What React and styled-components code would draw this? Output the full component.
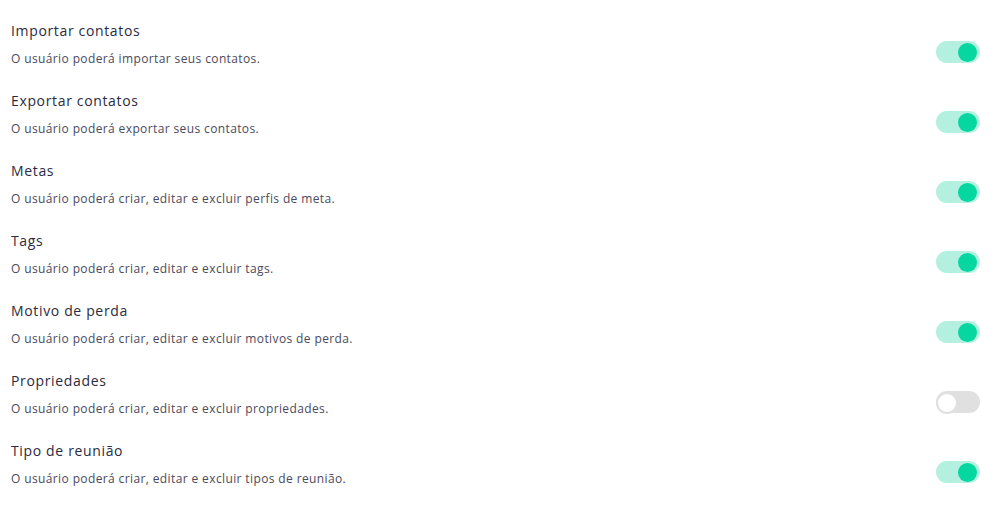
import React, { useState } from "react";
import styled, { createGlobalStyle } from "styled-components";

const Global = createGlobalStyle`
  html, body { margin: 0; padding: 0; background: #ffffff; }
  body { font-family: "Open Sans", "Noto Sans", sans-serif; }
`;

const List = styled.div`
  display: flex;
  flex-direction: column;
  padding: 16px 14px 0 11px;
`;

const Row = styled.div`
  display: flex;
  justify-content: space-between;
  align-items: flex-start;
  height: 70px;
`;

const TextBlock = styled.div`
  display: flex;
  flex-direction: column;
  padding-top: 5px;
`;

const Title = styled.div`
  font-size: 14px;
  line-height: 20px;
  color: #2b2b40;
  letter-spacing: 0.65px;
`;

const Desc = styled.div`
  margin-top: 8px;
  font-size: 12px;
  line-height: 20px;
  color: #4a4a5c;
  letter-spacing: 0.38px;
`;

const Track = styled.button`
  position: relative;
  margin-top: 25px;
  width: 44px;
  height: 22px;
  border: none;
  padding: 0;
  border-radius: 11px;
  cursor: pointer;
  background: ${(p) => (p.$on ? "#b3f0e0" : "#e0e0e0")};
`;

const Knob = styled.span`
  position: absolute;
  top: ${(p) => (p.$on ? "1.5px" : "1px")};
  left: ${(p) => (p.$on ? "22px" : "0px")};
  width: ${(p) => (p.$on ? "19px" : "18px")};
  height: ${(p) => (p.$on ? "19px" : "18px")};
  border-radius: 50%;
  background: ${(p) => (p.$on ? "#06d6a0" : "#ffffff")};
  border: ${(p) => (p.$on ? "none" : "2px solid #e0e0e0")};
  box-sizing: content-box;
`;

const items = [
  ["Importar contatos", "O usuário poderá importar seus contatos.", true],
  ["Exportar contatos", "O usuário poderá exportar seus contatos.", true],
  ["Metas", "O usuário poderá criar, editar e excluir perfis de meta.", true],
  ["Tags", "O usuário poderá criar, editar e excluir tags.", true],
  ["Motivo de perda", "O usuário poderá criar, editar e excluir motivos de perda.", true],
  ["Propriedades", "O usuário poderá criar, editar e excluir propriedades.", false],
  ["Tipo de reunião", "O usuário poderá criar, editar e excluir tipos de reunião.", true],
];

function Toggle({ initial }) {
  const [on, setOn] = useState(initial);
  return (
    <Track $on={on} onClick={() => setOn(!on)} aria-pressed={on}>
      <Knob $on={on} />
    </Track>
  );
}

export default function App() {
  return (
    <>
      <Global />
      <List>
        {items.map(([t, d, on]) => (
          <Row key={t}>
            <TextBlock>
              <Title>{t}</Title>
              <Desc>{d}</Desc>
            </TextBlock>
            <Toggle initial={on} />
          </Row>
        ))}
      </List>
    </>
  );
}
